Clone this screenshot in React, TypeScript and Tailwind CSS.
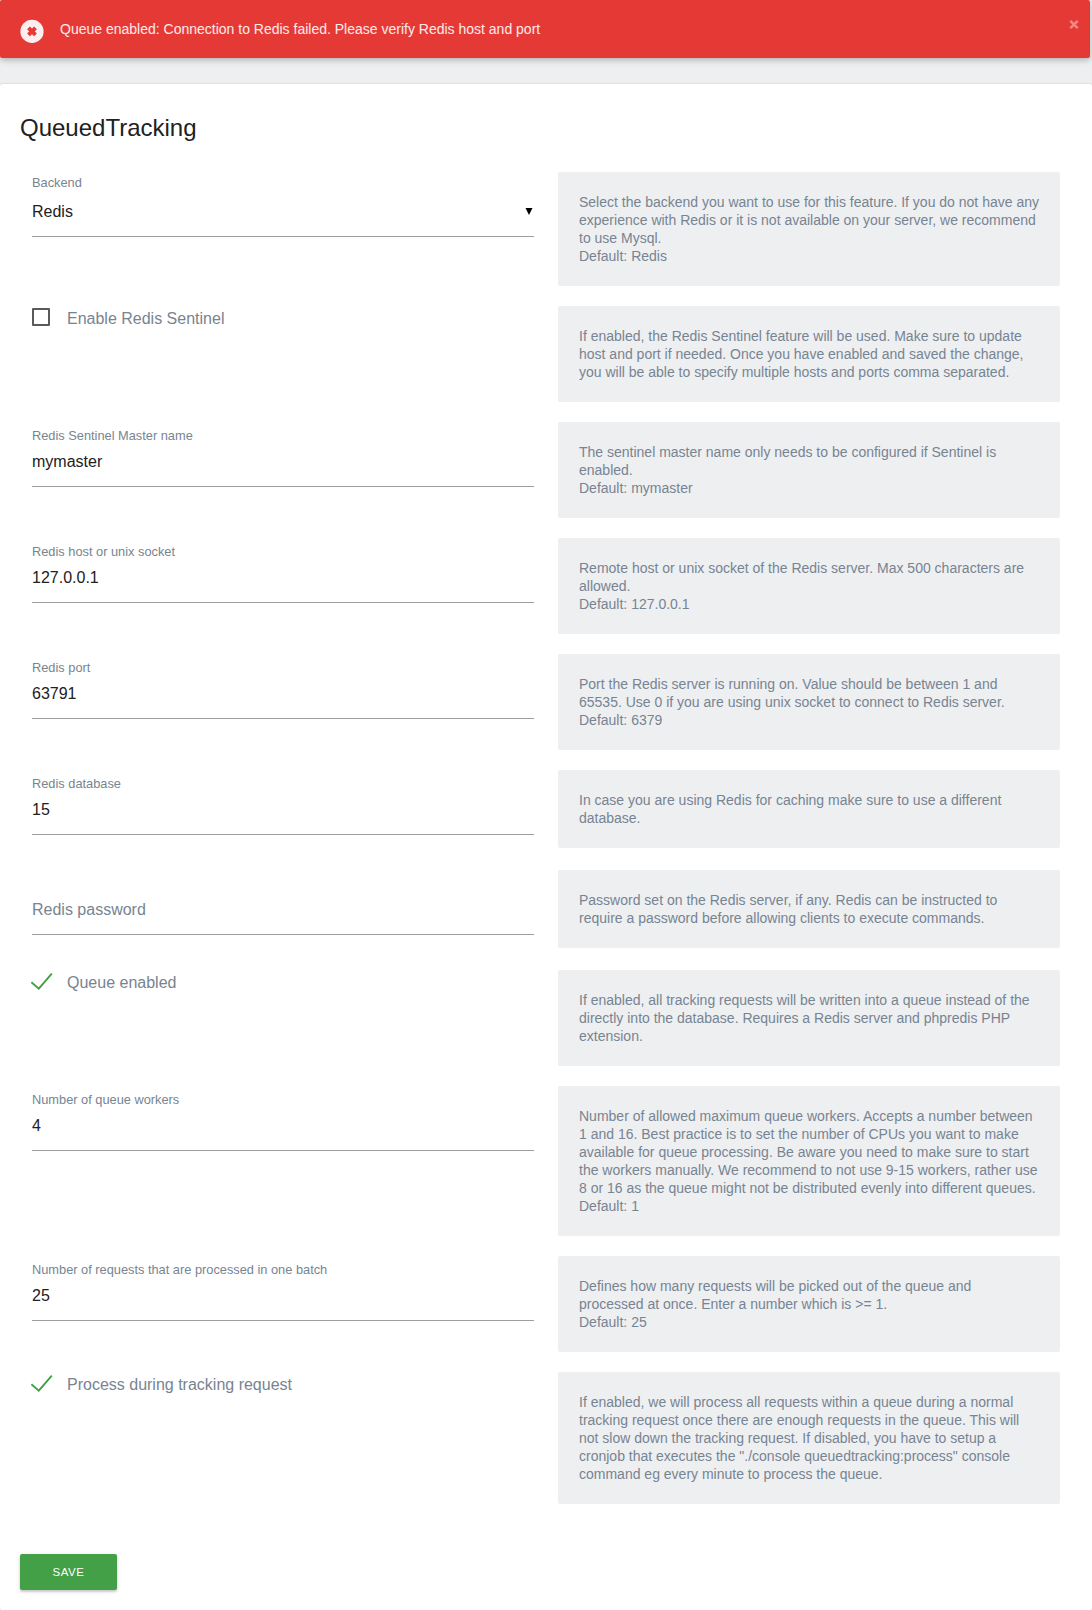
import React from "react";

type Field = {
  kind: "select" | "text" | "empty" | "check";
  label: string;
  value?: string;
  checked?: boolean;
  help: string;
  def?: string;
};

const fields: Field[] = [
  { kind: "select", label: "Backend", value: "Redis", help: "Select the backend you want to use for this feature. If you do not have any experience with Redis or it is not available on your server, we recommend to use Mysql.", def: "Redis" },
  { kind: "check", label: "Enable Redis Sentinel", checked: false, help: "If enabled, the Redis Sentinel feature will be used. Make sure to update host and port if needed. Once you have enabled and saved the change, you will be able to specify multiple hosts and ports comma separated." },
  { kind: "text", label: "Redis Sentinel Master name", value: "mymaster", help: "The sentinel master name only needs to be configured if Sentinel is enabled.", def: "mymaster" },
  { kind: "text", label: "Redis host or unix socket", value: "127.0.0.1", help: "Remote host or unix socket of the Redis server. Max 500 characters are allowed.", def: "127.0.0.1" },
  { kind: "text", label: "Redis port", value: "63791", help: "Port the Redis server is running on. Value should be between 1 and 65535. Use 0 if you are using unix socket to connect to Redis server.", def: "6379" },
  { kind: "text", label: "Redis database", value: "15", help: "In case you are using Redis for caching make sure to use a different database." },
  { kind: "empty", label: "Redis password", help: "Password set on the Redis server, if any. Redis can be instructed to require a password before allowing clients to execute commands." },
  { kind: "check", label: "Queue enabled", checked: true, help: "If enabled, all tracking requests will be written into a queue instead of the directly into the database. Requires a Redis server and phpredis PHP extension." },
  { kind: "text", label: "Number of queue workers", value: "4", help: "Number of allowed maximum queue workers. Accepts a number between 1 and 16. Best practice is to set the number of CPUs you want to make available for queue processing. Be aware you need to make sure to start the workers manually. We recommend to not use 9-15 workers, rather use 8 or 16 as the queue might not be distributed evenly into different queues.", def: "1" },
  { kind: "text", label: "Number of requests that are processed in one batch", value: "25", help: "Defines how many requests will be picked out of the queue and processed at once. Enter a number which is >= 1.", def: "25" },
  { kind: "check", label: "Process during tracking request", checked: true, help: 'If enabled, we will process all requests within a queue during a normal tracking request once there are enough requests in the queue. This will not slow down the tracking request. If disabled, you have to setup a cronjob that executes the "./console queuedtracking:process" console command eg every minute to process the queue.' },
];

function Control({ field }: { field: Field }) {
  if (field.kind === "check") {
    return (
      <div className="flex items-start text-[16px] leading-6 text-[#778491]">
        {field.checked ? (
          <svg className="-ml-0.5 mt-[3px] h-5 w-6 shrink-0" viewBox="0 0 24 20" fill="none" stroke="#43a047" strokeWidth="1.9">
            <path d="M1.4 9.3 L8.8 15.7 L21.8 0.6" />
          </svg>
        ) : (
          <span className="mr-1 mt-0.5 h-[18px] w-[18px] shrink-0 rounded-[1px] border-2 border-[#5a5a5a]" />
        )}
        <span className="ml-[13px] pt-px">{field.label}</span>
      </div>
    );
  }
  return (
    <div className="flex h-[65px] flex-col border-b border-[#9e9e9e]">
      <div className={field.kind === "select" ? "h-7 text-[12.8px] leading-[22px]" : "h-7 pt-[3px] text-[12.8px] leading-[22px]"}>
        <span className="text-[#778491]">{field.kind === "empty" ? "" : field.label}</span>
      </div>
      <div className="flex h-6 items-center justify-between text-[16px] leading-6">
        <span className={field.kind === "empty" ? "text-[#778491]" : "text-[#212121]"}>
          {field.kind === "empty" ? field.label : field.value}
        </span>
        {field.kind === "select" && (
          <svg className="mb-0.5 mr-px h-[7px] w-2" viewBox="0 0 8 7">
            <path d="M0.5 0 H7.5 L4 7 Z" fill="#000" />
          </svg>
        )}
      </div>
    </div>
  );
}

export default function App() {
  return (
    <div className="h-[1610px] w-[1092px] overflow-hidden bg-[#eeeff1] font-['Liberation_Sans',Arial,sans-serif]">
      <div className="flex h-[58px] w-[1090px] items-start rounded-[2px] bg-[#e53935] shadow-[0_2px_5px_0_rgba(0,0,0,0.16),0_2px_10px_0_rgba(0,0,0,0.12)]">
        <svg className="ml-5 mt-[19px] h-6 w-6 shrink-0" viewBox="0 0 24 24">
          <circle cx="12" cy="12.4" r="11.6" fill="#fff" fillOpacity="0.92" />
          <path d="M8.5 8.9 L15.5 15.9 M15.5 8.9 L8.5 15.9" stroke="#e53935" strokeWidth="4" />
        </svg>
        <p className="ml-4 mt-5 text-[14px] leading-[18px] text-white/90">
          Queue enabled: Connection to Redis failed. Please verify Redis host and port
        </p>
        <button className="ml-auto mr-[11px] mt-5" aria-label="Close">
          <svg className="h-[9px] w-2.5" viewBox="0 0 10 9">
            <path d="M1.3 0.9 L8.7 8.1 M8.7 0.9 L1.3 8.1" stroke="#f08a87" strokeWidth="2.5" />
          </svg>
        </button>
      </div>
      <div className="mt-[26px] h-[1526px] rounded-[2px] bg-white px-5 shadow-[0_0_2px_rgba(0,0,0,0.2)]">
        <h2 className="h-[88px] pt-[29px] text-[24px] leading-[30px] text-[#212121]">QueuedTracking</h2>
        {fields.map((f) => (
          <div key={f.label} className="grid min-h-[100px] grid-cols-[502px_502px] items-start gap-x-6 pb-5 pl-3">
            <Control field={f} />
            <div className="rounded-[2px] bg-[#eeeff1] p-[21px] text-[14px] leading-[18px] text-[#778491]">
              <p>{f.help}</p>
              {f.def && <p>Default: {f.def}</p>}
            </div>
          </div>
        ))}
        <button className="mt-[30px] flex h-9 w-[97px] items-center justify-center rounded-[2px] bg-[#43a047] pt-0.5 text-[11.5px] tracking-[0.5px] text-white shadow-[0_2px_2px_0_rgba(0,0,0,0.14),0_1px_5px_0_rgba(0,0,0,0.12)]">
          SAVE
        </button>
      </div>
    </div>
  );
}
